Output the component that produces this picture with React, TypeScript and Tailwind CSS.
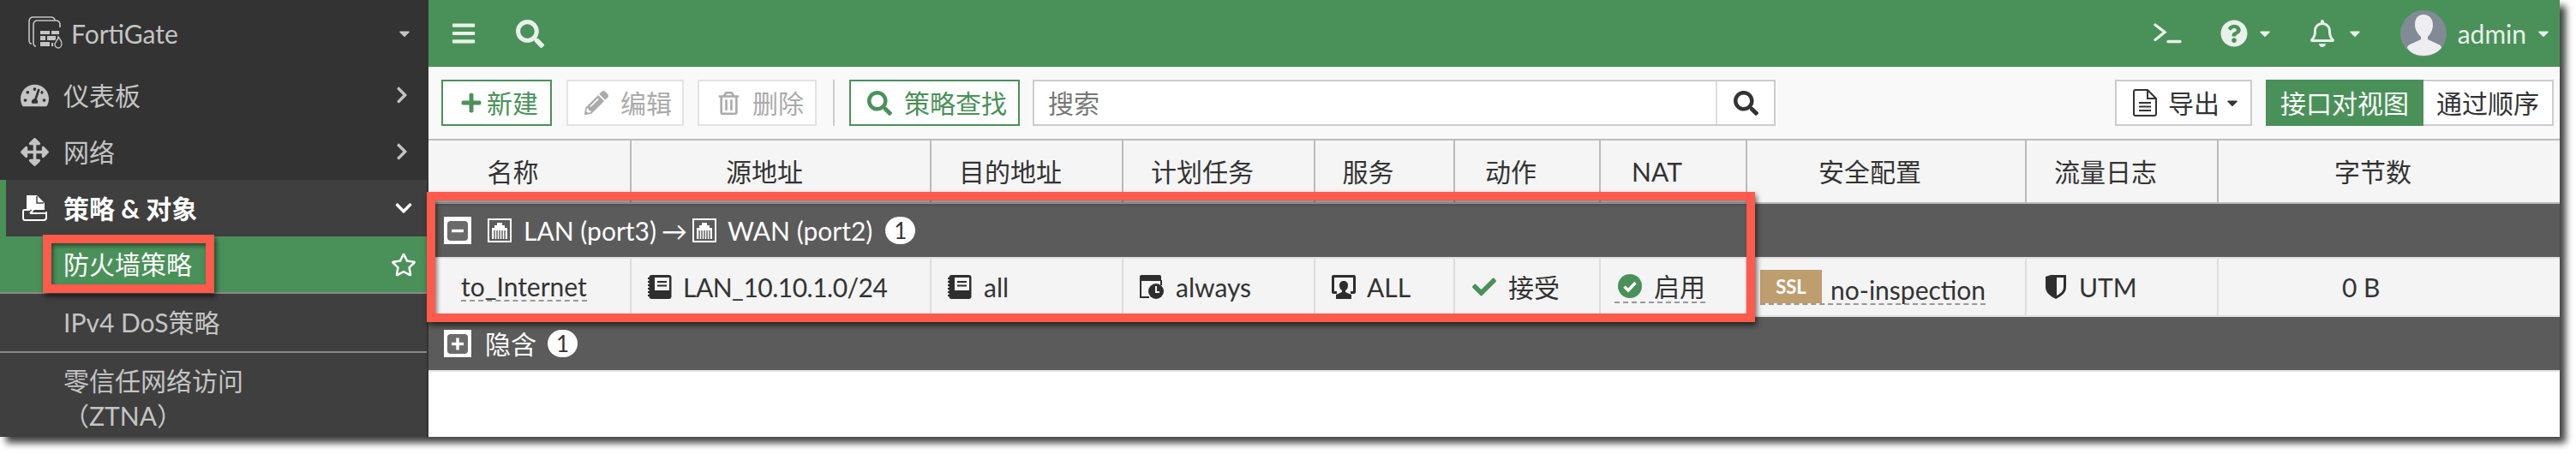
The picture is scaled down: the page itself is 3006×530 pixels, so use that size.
import {
  FaArrowsAlt,
  FaBars,
  FaCaretDown,
  FaCheck,
  FaChevronDown,
  FaChevronRight,
  FaPencilAlt,
  FaPlus,
  FaQuestionCircle,
  FaRegBell,
  FaRegStar,
  FaRegTrashAlt,
  FaSearch,
  FaTachometerAlt,
} from 'react-icons/fa';

const LogoIcon = () => (
  <svg width="42" height="40" viewBox="0 0 42 40" fill="none" className="text-[#c4c4c4]">
    <path d="M4 32 Q1 32 1 28 V6 Q1 1 6 1 H26 Q31 1 31 5" stroke="currentColor" strokeWidth="1.6" />
    <path d="M9 35 Q6 35 6 31 V10 Q6 5 11 5 H32 Q37 5 37 10 V13" stroke="currentColor" strokeWidth="1.6" />
    <path d="M14 17h11v4H14zM27 17h9v4h-9zM14 23h6v5h-6zM22 23h10v5H22zM14 30h11v5H14zM27 31h3v4h-3z" fill="currentColor" />
    <path d="M34 21c3 4 6 7 6 11 0 3-3 6-6 6-3 0-5-2-5-5 0-4 5-7 5-12z" fill="#333" />
    <path d="M35 24c2 3 4 5 4 8 0 3-2 5-4 5-2 0-4-2-4-4 0-3 4-5 4-9z" stroke="currentColor" strokeWidth="1.4" />
  </svg>
);

const PolicyIcon = () => (
  <svg width="30" height="30" viewBox="0 0 30 30">
    <path d="M5 0h12l9 9v8H5z" fill="#fff" />
    <path d="M17 1v8h8" fill="none" stroke="#3f3f3f" strokeWidth="1.5" />
    <path d="M9 17 H2.5 Q1 17 1 19 V26 Q1 29 3 29 H25 Q28 29 28 26 V19" fill="none" stroke="#fff" strokeWidth="2" />
    <path d="M9 21h19" stroke="#fff" strokeWidth="2" />
    <path d="M9 21 L13 17" stroke="#fff" strokeWidth="2" />
  </svg>
);

const PortIcon = () => (
  <svg width="28" height="28" viewBox="0 0 28 28">
    <rect x="1" y="1" width="26" height="26" fill="#5b5b5b" stroke="#fff" strokeWidth="2" />
    <path d="M5 24V11h3V8h3V5h6v3h3v3h3v13z" fill="#fff" />
    <path d="M8 14v10M11 14v10M14 14v10M17 14v10M20 14v10" stroke="#5b5b5b" strokeWidth="1.4" />
  </svg>
);

const ToggleBox = ({ open }: { open: boolean }) => (
  <svg width="32" height="32" viewBox="0 0 32 32">
    <rect width="32" height="32" fill="#fff" />
    <rect x="4" y="5" width="24" height="23" rx="4" fill="#6b6b6b" />
    <path d="M9 16.5h14" stroke="#fff" strokeWidth="3.4" />
    {!open && <path d="M16 9.5v14" stroke="#fff" strokeWidth="3.4" />}
  </svg>
);

const AddressIcon = () => (
  <svg width="28" height="28" viewBox="0 0 28 28">
    <rect x="1.5" y="0" width="26" height="28" rx="3" fill="#2e2e2e" />
    <path d="M1 3v2M1 7v2M1 11v2M1 15v2M1 19v2M1 23v2" stroke="#2e2e2e" strokeWidth="2" />
    <rect x="8" y="3" width="17" height="15" fill="#f4f4f4" />
    <path d="M11 8h11M11 12.5h11" stroke="#2e2e2e" strokeWidth="2" />
  </svg>
);

const ScheduleIcon = () => (
  <svg width="28" height="28" viewBox="0 0 28 28">
    <path d="M2 0h21q2 0 2 2v5H0V2q0-2 2-2z" fill="#2e2e2e" />
    <path d="M1 6v20h10" fill="none" stroke="#2e2e2e" strokeWidth="2" />
    <path d="M25 6v6" stroke="#2e2e2e" strokeWidth="2" />
    <circle cx="19" cy="19" r="9" fill="#2e2e2e" />
    <path d="M19 13v7h4" fill="none" stroke="#f4f4f4" strokeWidth="2" />
  </svg>
);

const ServiceIcon = () => (
  <svg width="28" height="28" viewBox="0 0 28 28">
    <path d="M2 0h24q2 0 2 2v18q0 2-2 2h-4v-3h3V3H3v16h3v3H2q-2 0-2-2V2q0-2 2-2z" fill="#2e2e2e" />
    <path d="M14 7c3 0 5 2 5 5 0 3-1 5-3 6v2l7 3v5H5v-5l7-3v-2c-2-1-3-3-3-6 0-3 2-5 5-5z" fill="#2e2e2e" />
  </svg>
);

const ShieldIcon = () => (
  <svg width="24" height="28" viewBox="0 0 24 28">
    <path d="M0 2l6-2h18v14c0 7-6 11-12 14C6 25 0 21 0 14z" fill="#2e2e2e" />
    <path d="M13 3h8v11c0 5-4 8-8 10z" fill="#f4f4f4" />
  </svg>
);

const EnabledIcon = () => (
  <svg width="28" height="28" viewBox="0 0 28 28">
    <circle cx="14" cy="14" r="14" fill="#4a9159" />
    <path d="M7.5 14.5l4.5 4.5 8.5-9" fill="none" stroke="#fff" strokeWidth="3.4" />
  </svg>
);

const ExportIcon = () => (
  <svg width="28" height="32" viewBox="0 0 28 32" fill="none" stroke="#333" strokeWidth="2">
    <path d="M1 3q0-2 2-2h14l10 10v18q0 2-2 2H3q-2 0-2-2z" />
    <path d="M17 1v10h10" />
    <path d="M7 16h14M7 20.500h14M7 25h14" />
  </svg>
);

const TerminalIcon = () => (
  <svg width="33" height="24" viewBox="0 0 33 24" fill="none" stroke="#e8f1ea" strokeWidth="3.4" strokeLinecap="round">
    <path d="M2 2l11 8.500-11 9" />
    <path d="M17 21.500h14" />
  </svg>
);

const Avatar = () => (
  <svg width="54" height="54" viewBox="0 0 54 54">
    <circle cx="27" cy="27" r="27" fill="#808b96" />
    <path d="M27 5c7 0 11 5 11 12 0 6-3 11-6 14v3l13 6c2 1 3 2 3 4-5 6-13 9-21 9S12 50 8 44c0-2 1-3 3-4l13-6v-3c-3-3-7-8-7-14C17 10 20 5 27 5z" fill="#eeeef0" />
  </svg>
);

const Badge = () => (
  <span className="flex h-[32px] w-[35px] items-center justify-center rounded-full bg-white text-[26px] text-[#333]">1</span>
);

const headers = ['名称', '源地址', '目的地址', '计划任务', '服务', '动作', 'NAT', '安全配置', '流量日志', '字节数'];
const gridCols = 'grid grid-cols-[237px_350px_224px_224px_163px_170px_171px_326px_224px_398px]';

export default function App() {
  return (
    <div className="relative h-[530px] w-[3006px] overflow-hidden bg-white font-[Lato,'Noto_Sans_CJK_SC',sans-serif] text-[30px] text-[#333]">
      <div className="flex h-[510px] w-[2987px] shadow-[7px_7px_8px_rgba(0,0,0,0.75)]">
        {/* sidebar */}
        <aside className="flex w-[500px] shrink-0 flex-col border-r-2 border-[#333] bg-[#333] text-[#c4c4c4]">
          <div className="flex h-[78px] items-center pl-[33px] pr-[16px]">
            <LogoIcon />
            <span className="ml-[8px] flex-1">FortiGate</span>
            <FaCaretDown size={20} />
          </div>
          <div className="flex h-[66px] items-center pl-[24px] pr-[18px]">
            <FaTachometerAlt size={33} />
            <span className="ml-[17px] flex-1">仪表板</span>
            <FaChevronRight size={22} />
          </div>
          <div className="flex h-[66px] items-center pl-[24px] pr-[18px]">
            <FaArrowsAlt size={33} />
            <span className="ml-[17px] flex-1">网络</span>
            <FaChevronRight size={22} />
          </div>
          <div className="flex h-[66px] items-center border-l-[7px] border-[#4a9159] bg-[#3f3f3f] pl-[19px] pr-[16px] font-bold text-white">
            <PolicyIcon />
            <span className="ml-[18px] flex-1">策略 & 对象</span>
            <FaChevronDown size={22} />
          </div>
          <div className="flex h-[67px] items-center border-b-2 border-[#8a8a8a] bg-[#4a9159] pl-[74px] pr-[12px] text-white">
            <span className="flex-1">防火墙策略</span>
            <FaRegStar size={30} />
          </div>
          <div className="flex h-[69px] items-center border-b-2 border-[#8a8a8a] bg-[#3f3f3f] pl-[74px]">IPv4 DoS策略</div>
          <div className="flex-1 bg-[#3f3f3f] pl-[74px] pt-[12px] leading-[41px]">
            零信任网络访问
            <br />
            （ZTNA）
          </div>
        </aside>

        <main className="flex min-w-0 flex-1 flex-col">
          {/* top bar */}
          <header className="flex h-[78px] items-center bg-[#4a9159] pl-[26px] text-[#e8f1ea]">
            <FaBars size={30} />
            <FaSearch size={33} className="ml-[46px]" />
            <div className="ml-auto flex items-center">
              <TerminalIcon />
              <FaQuestionCircle size={32} className="ml-[45px]" />
              <FaCaretDown size={20} className="ml-[10px]" />
              <FaRegBell size={32} className="ml-[41px]" />
              <FaCaretDown size={20} className="ml-[12px]" />
              <div className="ml-[43px]">
                <Avatar />
              </div>
              <span className="ml-[13px]">admin</span>
              <FaCaretDown size={20} className="ml-[10px] mr-[9px]" />
            </div>
          </header>

          {/* toolbar */}
          <div className="flex h-[86px] items-center border-b-2 border-[#bbb] bg-[#f9f9f9] pl-[15px]">
            <button className="flex h-[54px] w-[129px] items-center gap-[5px] border-2 border-[#4a9159] bg-white pl-[20px] text-[#4a9159]">
              <FaPlus size={26} />
              新建
            </button>
            <button className="ml-[17px] flex h-[54px] w-[137px] items-center gap-[14px] border-2 border-[#e3e3e3] bg-white pl-[19px] text-[#aaa]">
              <FaPencilAlt size={28} />
              编辑
            </button>
            <button className="ml-[16px] flex h-[54px] w-[139px] items-center gap-[14px] border-2 border-[#e3e3e3] bg-white pl-[21px] text-[#aaa]">
              <FaRegTrashAlt size={27} />
              删除
            </button>
            <div className="ml-[19px] h-[54px] w-[2px] bg-[#ccc]" />
            <button className="ml-[17px] flex h-[54px] w-[199px] items-center gap-[14px] border-2 border-[#4a9159] bg-white pl-[19px] text-[#4a9159]">
              <FaSearch size={29} />
              策略查找
            </button>
            <div className="ml-[15px] flex h-[54px] w-[867px] items-center border-2 border-[#ccc] bg-white">
              <span className="flex-1 pl-[16px] text-[#777]">搜索</span>
              <div className="flex h-full w-[68px] items-center justify-center border-l-2 border-[#ddd] text-[#333]">
                <FaSearch size={29} />
              </div>
            </div>
            <button className="ml-[396px] flex h-[54px] w-[160px] items-center border-2 border-[#ccc] bg-white pl-[19px]">
              <ExportIcon />
              <span className="ml-[13px]">导出</span>
              <FaCaretDown size={20} className="ml-[5px]" />
            </button>
            <div className="ml-[16px] flex h-[54px] w-[336px] items-center">
              <span className="flex h-full w-[184px] items-center justify-center bg-[#4a9159] text-white">接口对视图</span>
              <span className="flex h-full w-[152px] items-center justify-center border-2 border-l-0 border-[#ccc] bg-white">通过顺序</span>
            </div>
          </div>

          {/* table head */}
          <div className={`${gridCols} h-[74px] border-b-2 border-[#bbb] bg-[#f5f5f5]`}>
            {headers.map((h) => (
              <div key={h} className="flex items-center justify-center border-r-2 border-[#bbb] pr-[38px] last:border-r-0">
                {h}
              </div>
            ))}
          </div>

          {/* LAN -> WAN group */}
          <div className="flex h-[62px] items-center bg-[#5b5b5b] pl-[18px] text-white">
            <ToggleBox open />
            <div className="ml-[19px]">
              <PortIcon />
            </div>
            <span className="ml-[14px]">LAN (port3)</span>
            <span className="mx-[6px]">→</span>
            <PortIcon />
            <span className="ml-[13px] mr-[15px]">WAN (port2)</span>
            <Badge />
          </div>

          <div className={`${gridCols} h-[70px] border-y-2 border-[#e2e2e2] bg-[#f4f4f4]`}>
            <div className="flex items-center border-r-2 border-[#ddd] pl-[38px]">
              <span className="border-b-2 border-dashed border-[#999] leading-[32px]">to_Internet</span>
            </div>
            <div className="flex items-center gap-[13px] border-r-2 border-[#ddd] pl-[19px]">
              <AddressIcon />
              <span className="tracking-[-0.5px]">LAN_10.10.1.0/24</span>
            </div>
            <div className="flex items-center gap-[14px] border-r-2 border-[#ddd] pl-[19px]">
              <AddressIcon />
              all
            </div>
            <div className="flex items-center gap-[14px] border-r-2 border-[#ddd] pl-[19px]">
              <ScheduleIcon />
              always
            </div>
            <div className="flex items-center gap-[13px] border-r-2 border-[#ddd] pl-[19px]">
              <ServiceIcon />
              ALL
            </div>
            <div className="flex items-center gap-[14px] border-r-2 border-[#ddd] pl-[20px]">
              <FaCheck size={28} className="text-[#4a9159]" />
              接受
            </div>
            <div className="flex items-center border-r-2 border-[#ddd] pl-[16px]">
              <span className="flex items-center gap-[14px] border-b-2 border-dashed border-[#999] pl-[4px] leading-[36px]">
                <EnabledIcon />
                启用
              </span>
            </div>
            <div className="flex items-center border-r-2 border-[#ddd] pl-[15px]">
              <span className="flex items-end gap-[10px] border-b-2 border-dashed border-[#999]">
                <span className="flex h-[39px] w-[72px] items-center justify-center bg-[#be9e6e] text-[22px] font-bold text-white">SSL</span>
                <span className="leading-[32px]">no-inspection</span>
              </span>
            </div>
            <div className="flex items-center gap-[15px] border-r-2 border-[#ddd] pl-[22px]">
              <ShieldIcon />
              UTM
            </div>
            <div className="flex items-center pl-[144px]">0 B</div>
          </div>

          {/* implicit group */}
          <div className="flex h-[62px] items-center bg-[#5b5b5b] pl-[18px] text-white">
            <ToggleBox open={false} />
            <span className="ml-[16px] mr-[13px]">隐含</span>
            <Badge />
          </div>
          <div className="flex-1 border-t-2 border-[#e2e2e2] bg-white" />
        </main>
      </div>

      {/* red annotation boxes */}
      <div className="absolute left-[50px] top-[274px] h-[68px] w-[200px] border-[10px] border-[#ff5a4c] shadow-[2px_4px_6px_rgba(0,0,0,0.6),inset_2px_3px_5px_rgba(0,0,0,0.5)]" />
      <div className="absolute left-[498px] top-[224px] h-[152px] w-[1550px] border-[10px] border-[#ff5a4c] shadow-[2px_4px_6px_rgba(0,0,0,0.6),inset_2px_3px_5px_rgba(0,0,0,0.5)]" />
    </div>
  );
}
